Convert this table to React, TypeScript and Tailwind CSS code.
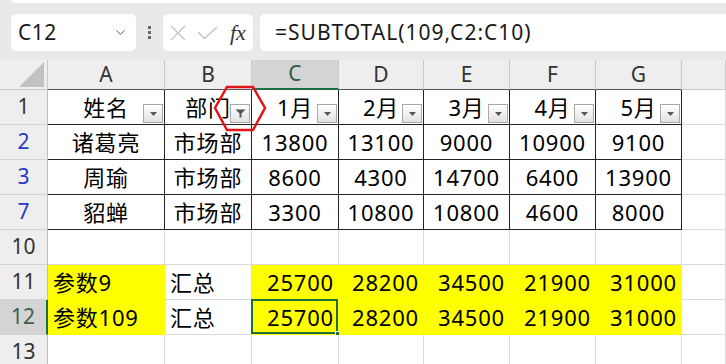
import { ChevronDown } from "lucide-react";

type Row = {
  n: string;
  blue?: boolean;
  head?: boolean;
  yellow?: boolean;
  active?: boolean;
  cells?: string[];
};

const rows: Row[] = [
  { n: "1", head: true, cells: ["姓名", "部门", "1月", "2月", "3月", "4月", "5月"] },
  { n: "2", blue: true, cells: ["诸葛亮", "市场部", "13800", "13100", "9000", "10900", "9100"] },
  { n: "3", blue: true, cells: ["周瑜", "市场部", "8600", "4300", "14700", "6400", "13900"] },
  { n: "7", blue: true, cells: ["貂蝉", "市场部", "3300", "10800", "10800", "4600", "8000"] },
  { n: "10" },
  { n: "11", yellow: true, cells: ["参数9", "汇总", "25700", "28200", "34500", "21900", "31000"] },
  { n: "12", yellow: true, active: true, cells: ["参数109", "汇总", "25700", "28200", "34500", "21900", "31000"] },
  { n: "13" },
];

const letters = ["A", "B", "C", "D", "E", "F", "G", ""];

const font = "font-['Noto_Sans','Noto_Sans_CJK_SC',sans-serif]";

function FilterButton(props: { active?: boolean }) {
  return (
    <div className="absolute right-[1px] bottom-[1px] w-[20px] h-[19px] border border-[#a9a9a9] bg-gradient-to-b from-white to-[#e2e2e2] flex items-center justify-center">
      {props.active ? (
        <svg width="11" height="9" viewBox="0 0 11 9">
          <path d="M0.5 0.5 H10.5 L6.5 4.5 V8.5 H4.5 V4.5 Z" fill="#555" />
        </svg>
      ) : (
        <svg width="7" height="4" viewBox="0 0 7 4">
          <path d="M0 0 H7 L3.5 4 Z" fill="#555" />
        </svg>
      )}
    </div>
  );
}

function Toolbar() {
  return (
    <div className="h-[60px] bg-[#e9e9eb]">
      <div className="h-[3px] ml-[12px] bg-white rounded-bl-[6px]" />
      <div className="flex items-center mt-[11px] pl-[11px] h-[37px]">
        <div className="w-[125px] h-full bg-white rounded-[5px] flex items-center justify-between pl-[7px] pr-[8px]">
          <span className={`${font} text-[21px] tracking-[0.5px] text-[#1a1a1a]`}>C12</span>
          <ChevronDown size={15} strokeWidth={1.5} color="#555" />
        </div>
        <div className="w-[27px] flex flex-col items-center gap-[2px]">
          <div className="w-[3px] h-[3px] bg-[#666]" />
          <div className="w-[3px] h-[3px] bg-[#666]" />
          <div className="w-[3px] h-[3px] bg-[#666]" />
        </div>
        <div className="w-[90px] h-full bg-white rounded-[5px] flex items-center pl-[7px]">
          <svg width="16" height="16" viewBox="0 0 16 16">
            <path d="M1 1 L15 15 M15 1 L1 15" stroke="#c4c4c4" strokeWidth="1.4" />
          </svg>
          <svg className="ml-[11px]" width="21" height="14" viewBox="0 0 21 14">
            <path d="M1 6 L7.5 12.5 L20 1" stroke="#c4c4c4" strokeWidth="1.4" fill="none" />
          </svg>
          <span className="ml-[12px] font-['Liberation_Serif',serif] italic text-[22px] text-[#333] leading-none">
            fx
          </span>
        </div>
        <div className="ml-[7px] flex-1 h-full bg-white rounded-l-[5px] flex items-center pl-[15px]">
          <span className={`${font} text-[21px] tracking-[1px] text-[#1a1a1a]`}>=SUBTOTAL(109,C2:C10)</span>
        </div>
      </div>
    </div>
  );
}

function HeaderRow() {
  return (
    <>
      <div className="bg-[#eeeeee] border-r border-b border-[#c9c9c9] relative">
        <svg className="absolute right-[3px] bottom-[2px]" width="25" height="25" viewBox="0 0 25 25">
          <path d="M25 0 V25 H0 Z" fill="#c2c2c2" />
        </svg>
      </div>
      {letters.map(function (l, i) {
        const sel = l === "C";
        const inTable = i < 7;
        return (
          <div
            key={i}
            className={`${font} flex items-center justify-center text-[21px] border-r border-[#c9c9c9] ${
              sel
                ? "bg-[#d4d4d4] text-[#2f5f40] border-b-2 border-b-[#1f6e43]"
                : `bg-[#eeeeee] text-[#333] border-b ${inTable ? "border-b-[#555]" : "border-b-[#c9c9c9]"}`
            }`}
          >
            {l}
          </div>
        );
      })}
    </>
  );
}

function RowHeader(props: { row: Row }) {
  const r = props.row;
  return (
    <div
      className={`${font} flex items-center justify-center text-[21px] border-b border-b-[#d2d2d2] ${
        r.active
          ? "bg-[#d4d4d4] text-[#3d5f49] border-r-2 border-r-[#1f6e43]"
          : `bg-[#eeeeee] border-r border-r-[#bdbdbd] ${r.blue ? "text-[#2638cc]" : "text-[#333]"}`
      }`}
    >
      {r.n}
    </div>
  );
}

function Cell(props: { row: Row; col: number }) {
  const r = props.row;
  const c = props.col;
  const text = r.cells && c < 7 ? r.cells[c] : "";
  const table = !!r.cells && !r.yellow && c < 7;
  const yellow = r.yellow && (c === 0 || (c >= 2 && c < 7));
  const isSel = r.active && c === 2;
  const isLastTableRow = r.n === "7";

  let border = "border-r border-b border-[#dadada]";
  if (table) border = "border-r border-b border-[#222]";
  else if (yellow) border = "border-r border-b border-[#ffff00]";

  let align = "justify-center";
  if (r.yellow) align = c < 2 ? "justify-start pl-[5px]" : "justify-end pr-[4px]";

  return (
    <div
      className={`${font} relative flex items-center ${align} text-[22px] tracking-[0.8px] text-[#000] ${border} ${
        yellow ? "bg-[#ffff00]" : "bg-white"
      } ${isLastTableRow && c < 7 ? "border-b-[#222]" : ""}`}
    >
      <span>{text}</span>
      {r.head && c < 7 && <FilterButton active={c === 1} />}
      {isSel && (
        <>
          <div className="absolute -left-[1px] -top-[1px] right-0 bottom-0 border-2 border-[#1f6e43]" />
          <div className="absolute -right-[3px] -bottom-[3px] w-[6px] h-[6px] bg-[#1f6e43] border border-white" />
        </>
      )}
    </div>
  );
}

export default function App() {
  return (
    <div className="w-[726px] h-[364px] overflow-hidden bg-white relative">
      <Toolbar />
      <div className="grid grid-cols-[48px_117px_87px_87px_85px_86px_86px_86px_44px] grid-rows-[30px_35px_35px_35px_35px_35px_35px_35px_35px]">
        <HeaderRow />
        {rows.map(function (r) {
          return (
            <div key={r.n} className="contents">
              <RowHeader row={r} />
              {[0, 1, 2, 3, 4, 5, 6, 7].map(function (c) {
                return <Cell key={c} row={r} col={c} />;
              })}
            </div>
          );
        })}
      </div>
      <svg className="absolute left-0 top-0 pointer-events-none" width="726" height="364">
        <polygon
          points="227,87 253,87 265,108 253,130 227,130 215,108"
          fill="none"
          stroke="#e5141b"
          strokeWidth="2.5"
        />
      </svg>
    </div>
  );
}
